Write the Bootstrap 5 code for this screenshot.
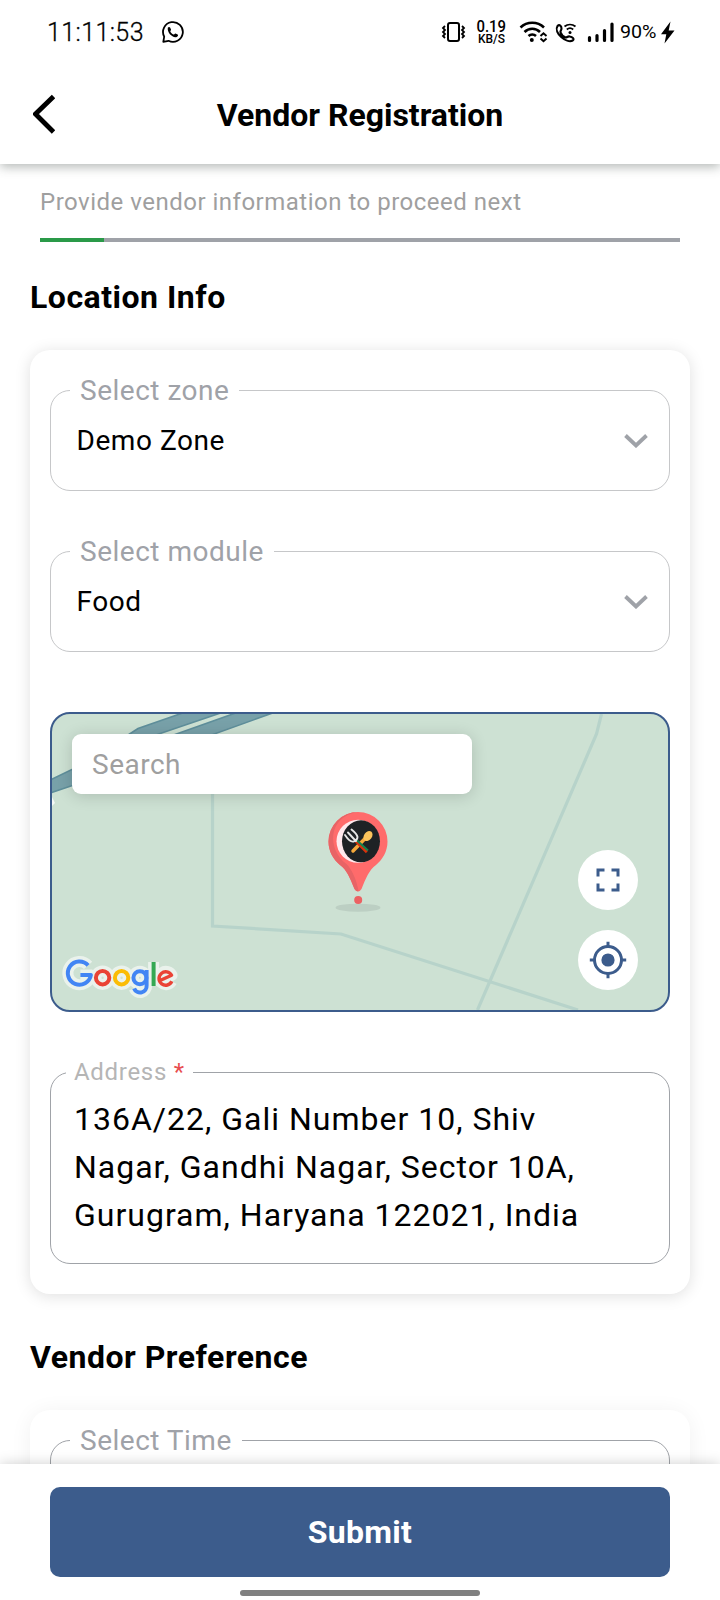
<!DOCTYPE html>
<html lang="en">
<head>
<meta charset="utf-8">
<meta name="viewport" content="width=device-width, initial-scale=1">
<title>Vendor Registration</title>
<link href="https://cdn.jsdelivr.net/npm/bootstrap@5.3.0/dist/css/bootstrap.min.css" rel="stylesheet">
<style>
  body { font-family: Roboto, "Liberation Sans", sans-serif; color: #000; background: #fff; letter-spacing: .5px; line-height: 1; }
  .screen { width: 720px; height: 1600px; }
  .app-head { height: 164px; box-shadow: 0 3px 10px rgba(60,70,65,.38); z-index: 2; }
  .status { height: 64px; padding: 0 44px 0 47px; }
  .clock { font-size: 25px; font-weight: 300; letter-spacing: .4px; width: 115px; -webkit-text-stroke: .3px #000; }
  .stat-font { letter-spacing: 0; }
  .title { font-size: 32px; font-weight: 700; letter-spacing: 0; height: 100px; padding: 0 33px; }
  .title span { padding: 2px 22px 0 0; }
  .hint { font-size: 24px; letter-spacing: .5px; color: #9f9f9f; line-height: 28px; }
  .steps { height: 4px; border-radius: 0; background: #9fa2a8; }
  .steps .progress-bar { background: #2a9a48; }
  .sect { font-size: 32px; font-weight: 700; line-height: 36px; letter-spacing: .5px; margin: 0; }
  .panel { border-radius: 20px; background: #fff; box-shadow: 0 2px 16px rgba(0,0,0,.13); }
  .panel.soft { box-shadow: 0 2px 22px rgba(0,0,0,.06); }
  .field { border: 1px solid #c6c7c9; border-radius: 20px; height: 101px; }
  .field.dark { border-color: #a0a3a8; }
  .field-label { background: #fff; font-size: 28px; line-height: 32px; margin: -16px 0 0 19px; padding: 0 10px; color: #9fa2a8; letter-spacing: .5px; }
  .field-value { font-size: 28px; line-height: 32px; letter-spacing: .55px; padding: 18px 21px 0 25.5px; }
  .addr-label { font-size: 24px; line-height: 28px; margin: -15px 0 0 15px; padding: 0 8px; color: #b5b5b5; letter-spacing: .7px; }
  .addr-label span { color: #e84d4f; }
  .addr { font-size: 32px; line-height: 48px; letter-spacing: 1px; padding: 9px 23px 0; }
  .map { height: 300px; border: 2px solid #3c5c8c; border-radius: 20px; background: #cde1d3; }
  .map-search { width: 400px; height: 60px; border-radius: 9px; background: #fff; color: #9f9f9f; font-size: 28px; box-shadow: 0 2px 16px rgba(0,0,0,.16); padding: 2px 0 0 20px; }
  .round-btn { width: 60px; height: 60px; border-radius: 50%; background: #fff; border: 0; padding: 0; }
  .foot { height: 136px; background: #fff; box-shadow: 0 -1px 12px rgba(0,0,0,.17); padding: 23px 50px 0; z-index: 2; }
  .submit { height: 90px; border-radius: 10px; background: #3c5c8c; font-size: 32px; line-height: 1; font-weight: 700; color: #fff; letter-spacing: .3px; }
  .home { width: 240px; height: 6px; border-radius: 3px; background: #808080; margin-top: 13px; }
</style>
</head>
<body>
<div class="screen position-relative overflow-hidden d-flex flex-column">
  <header class="app-head position-relative bg-white flex-shrink-0">
    <div class="status d-flex align-items-center justify-content-between">
      <div class="d-flex align-items-center">
        <span class="clock">11:11:53</span>
        <svg width="22" height="22" viewBox="0 0 22 22"><path d="M1.300 20.800l.9-5.200A9.900 9.900 0 1 1 6.500 19.800z" fill="none" stroke="#000" stroke-width="1.800" stroke-linejoin="round"/><path d="M5.800 6.800c.5-1 1.700-1.300 2.300-.2l.9 2c.2.8-.7 1.200-.7 1.800.7 1.500 1.700 2.400 3.200 3.100.8.200 1.300-1.200 2-1l2.200 1.100c.9.800 0 2-1 2.400-4 1.300-9.700-4.200-8.900-9.200z"/></svg>
      </div>
      <svg class="stat-font" width="236" height="40" viewBox="440 12 236 40">
        <g fill="none" stroke="#000" stroke-width="2">
          <rect x="448" y="23" width="11" height="18" rx="2"/>
          <path d="M445 26l-2 2 2 2-2 2 2 2-2 2 2 2M462 26l2 2-2 2 2 2-2 2 2 2-2 2" stroke-width="1.800"/>
          <path d="M520.500 27.500a17 17 0 0 1 23.500 0M524.500 32a11 11 0 0 1 15.500 0M528.500 36a5.600 5.600 0 0 1 7.500 0" stroke-width="2.600"/>
          <path d="M540.500 36l3-2.800 3 2.800M540.500 38.500l3 2.800 3-2.800" stroke-width="1.900"/>
          <path d="M564.500 26.500a9 9 0 0 1 11 0M566.800 29.500a5 5 0 0 1 6.400 0" stroke-width="1.800"/>
          <path d="M557.500 26c2-2 4 0 4 2.500 0 2-1.500 2.500-1 3.800 1 2.500 3 4.500 5.200 5.200 1.300.2 2-1.500 4-1 3 .5 5 2.500 3 4-6 3.500-19.500-8-15.200-14.500z" stroke-width="2.100"/>
        </g>
        <circle cx="531.800" cy="40" r="2"/><circle cx="570" cy="32.500" r="1.500"/>
        <path d="M589.500 40.500v-3M597 40.500v-5M604.500 40.500v-10M612 40.500v-16.500" stroke="#000" stroke-width="3.200" stroke-linecap="round"/>
        <text x="476.500" y="32.300" font-size="16" font-weight="500" textLength="29.500" lengthAdjust="spacingAndGlyphs">0.19</text>
        <text x="478" y="43.200" font-size="12" font-weight="500" textLength="27" lengthAdjust="spacingAndGlyphs">KB/S</text>
        <text x="620" y="38" font-size="18.500" textLength="36.500" lengthAdjust="spacingAndGlyphs">90%</text>
        <path d="M670.500 21.500L661 34.200h5.300L664.500 43.500 674.500 30.500H668.700z"/>
      </svg>
    </div>
    <div class="title d-flex align-items-center">
      <svg width="22" height="40" viewBox="0 0 22 40"><path d="M20.500 2.500L2.500 20l18 18" fill="none" stroke="#000" stroke-width="4.800"/></svg>
      <span class="flex-grow-1 text-center">Vendor Registration</span>
    </div>
  </header>

  <main class="flex-grow-1">
    <div style="padding:24px 40px 0">
      <div class="hint">Provide vendor information to proceed next</div>
      <div class="progress steps" style="margin-top:22px"><div class="progress-bar" style="width:10%"></div></div>
    </div>
    <h2 class="sect" style="padding:37px 30px 0">Location Info</h2>

    <section class="panel" style="margin:34.500px 30px 0;padding:40px 20px 0;height:944px">
      <div class="field d-flex flex-column">
        <label class="field-label align-self-start">Select zone</label>
        <div class="field-value d-flex justify-content-between align-items-center"><span>Demo Zone</span>
          <svg width="24" height="14" viewBox="0 0 24 14"><path d="M1.500 1.500L12 11.500l10.500-10" fill="none" stroke="#9fa2a8" stroke-width="3.800"/></svg></div>
      </div>
      <div class="field d-flex flex-column" style="margin-top:60px">
        <label class="field-label align-self-start">Select module</label>
        <div class="field-value d-flex justify-content-between align-items-center"><span>Food</span>
          <svg width="24" height="14" viewBox="0 0 24 14"><path d="M1.500 1.500L12 11.500l10.500-10" fill="none" stroke="#9fa2a8" stroke-width="3.800"/></svg></div>
      </div>

      <div class="map position-relative overflow-hidden" style="margin-top:60.500px">
        <svg class="position-absolute top-0 start-0" width="616" height="296" viewBox="52 714 616 296">
          <g fill="#78a1a9" stroke="#5f8f9b" stroke-width="1.600">
            <path d="M50 780L74 768.500V785L50 793z"/>
            <path d="M125 737L138 728.500 184 712.500H222L150 737z"/>
            <path d="M168 737L237 712.500H274L206 737z"/>
          </g>
          <path d="M52 797l3 6-3 3z" fill="#f5f8f6"/>
          <path d="M212.500 780V926L341 934 578 1010M601.500 714L596.500 734 477.500 1010" fill="none" stroke="#b7d3ca" stroke-width="3.200"/>
          <ellipse cx="358" cy="907.700" rx="22.500" ry="4" fill="#bccfc3"/>
          <path d="M358 812a29.500 29.500 0 0 1 29.500 29.500c0 10-5 18-11.500 23.500-7 5-10 13-14.500 24q-3.500 5-7 0c-4.500-11-7.500-19-14.500-24-6.500-5.500-11.500-13.500-11.500-23.500A29.500 29.500 0 0 1 358 812z" fill="#ff6b6b"/>
          <path d="M358 812a29.500 29.500 0 0 0-29.500 29.500c0 10 5 18 11.500 23.500 7 5 10 13 14.500 24q2 3 4 2c-2-12-7-22-12-27-19-14-20-47 11.500-52z" fill="#e86466"/>
          <circle cx="358" cy="841.300" r="21.500" fill="#ffe9ed"/><ellipse cx="361" cy="841.300" rx="19" ry="21" fill="#1e2225"/>
          <path d="M353 851L367 836.500" stroke="#f5a93b" stroke-width="3.500" stroke-linecap="round"/>
          <ellipse cx="368" cy="836" rx="4" ry="5.500" transform="rotate(35 368 836)" fill="#fbc45c"/>
          <path d="M356 841L367 852" stroke="#d8320c" stroke-width="3.200"/><path d="M356.500 840L368 850.500" stroke="#11844f" stroke-width="2"/>
          <path d="M345 835q5 7.500 8.500 6.500 4-1.500 4-4.500-.5-3-6-7.500M348 832.500l5.500 6M353 838l3 3" fill="none" stroke="#e8e8e8" stroke-width="1.900" stroke-linecap="round"/>
          <circle cx="358.200" cy="900" r="4" fill="#ec6163"/>
          <g fill="none" stroke-linejoin="round" transform="translate(.6 0)">
            <g stroke="#eaf2ec" stroke-width="11">
              <path d="M87.500 965.400A11.600 11.600 0 1 0 90.300 975H79.800"/><circle cx="102" cy="977.700" r="6.700"/><circle cx="121" cy="977.700" r="6.700"/><circle cx="139.300" cy="977.700" r="6.500"/><path d="M146 970V985.500a6.500 6.500 0 0 1-12.500 3M153 962V986M160.500 980.200L171.500 975.300A6.700 6.700 0 1 0 171.200 981.300"/>
            </g>
            <g stroke-width="4">
              <path d="M87.500 965.400A11.600 11.600 0 1 0 90.300 975H79.800" stroke="#4285f4"/>
              <circle cx="102" cy="977.700" r="6.700" stroke="#ea4335"/><circle cx="121" cy="977.700" r="6.700" stroke="#fbbc05"/>
              <path d="M146 970V985.500a6.500 6.500 0 0 1-12.500 3" stroke="#4285f4"/><circle cx="139.300" cy="977.700" r="6.500" stroke="#4285f4"/>
              <path d="M153 962V986" stroke="#34a853"/><path d="M160 980.200L171 975.300A6.700 6.700 0 1 0 171.200 981.300" stroke="#ea4335" stroke-width="3.400"/>
            </g>
          </g>
        </svg>
        <div class="position-relative d-flex flex-column h-100" style="padding:20px 30px 20px 20px">
          <div class="map-search d-flex align-items-center">Search</div>
          <div class="d-flex flex-column align-items-end mt-auto" style="gap:20px">
            <button class="round-btn d-flex align-items-center justify-content-center" aria-label="Full screen"><svg width="24" height="24" viewBox="0 0 24 24" fill="none" stroke="#3c5c8c" stroke-width="3"><path d="M2 8.500V2h6.500M15.500 2H22v6.500M2 15.500V22h6.500M15.500 22H22v-6.500"/></svg></button>
            <button class="round-btn d-flex align-items-center justify-content-center" aria-label="My location"><svg width="38" height="38" viewBox="0 0 38 38" fill="none" stroke="#3c5c8c" stroke-width="3"><circle cx="19" cy="19" r="13.500"/><circle cx="19" cy="19" r="6.600" fill="#3c5c8c" stroke="none"/><path d="M19 .8v5M19 32.200v5M.8 19h5M32.200 19h5"/></svg></button>
          </div>
        </div>
      </div>

      <div class="field dark d-flex flex-column" style="margin-top:60px;height:192px">
        <label class="field-label addr-label align-self-start">Address <span>*</span></label>
        <div class="addr">136A/22, Gali Number 10, Shiv<br>Nagar, Gandhi Nagar, Sector 10A,<br>Gurugram, Haryana 122021, India</div>
      </div>
    </section>

    <h2 class="sect" style="padding:45px 30px 0">Vendor Preference</h2>
    <section class="panel soft" style="margin:35px 30px 0;padding:30px 20px 0;height:180px">
      <div class="field dark d-flex flex-column">
        <label class="field-label align-self-start">Select Time</label>
      </div>
    </section>
  </main>

  <footer class="foot position-absolute bottom-0 start-0 w-100">
    <button class="btn submit w-100 d-flex align-items-center justify-content-center">Submit</button>
    <div class="home mx-auto"></div>
  </footer>
</div>
<script src="https://cdn.jsdelivr.net/npm/bootstrap@5.3.0/dist/js/bootstrap.bundle.min.js"></script>
</body>
</html>
